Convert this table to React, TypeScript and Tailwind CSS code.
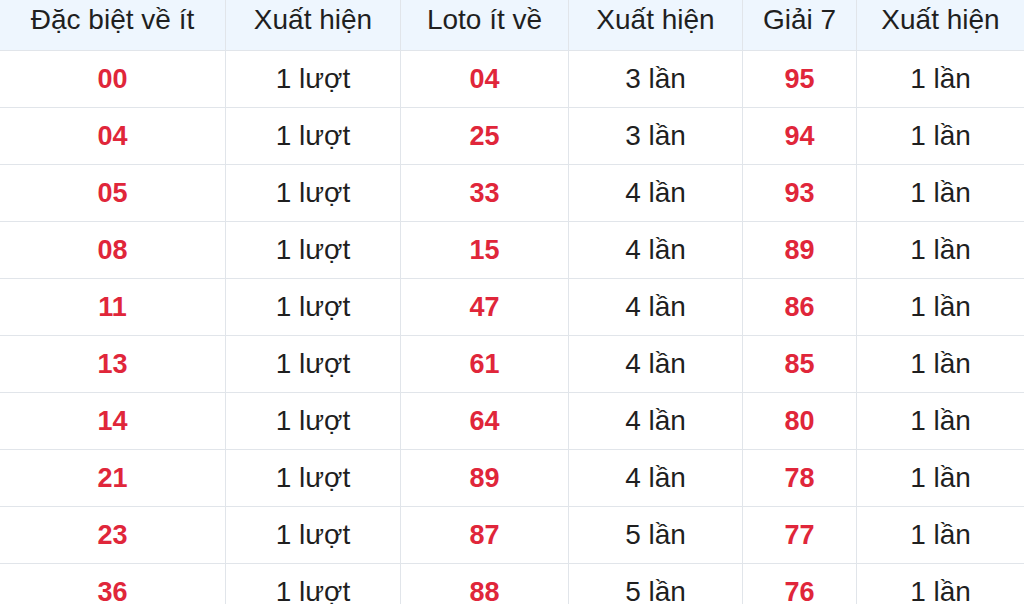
const rows: [string, string, string, string, string, string][] = [
  ["00", "1 lượt", "04", "3 lần", "95", "1 lần"],
  ["04", "1 lượt", "25", "3 lần", "94", "1 lần"],
  ["05", "1 lượt", "33", "4 lần", "93", "1 lần"],
  ["08", "1 lượt", "15", "4 lần", "89", "1 lần"],
  ["11", "1 lượt", "47", "4 lần", "86", "1 lần"],
  ["13", "1 lượt", "61", "4 lần", "85", "1 lần"],
  ["14", "1 lượt", "64", "4 lần", "80", "1 lần"],
  ["21", "1 lượt", "89", "4 lần", "78", "1 lần"],
  ["23", "1 lượt", "87", "5 lần", "77", "1 lần"],
  ["36", "1 lượt", "88", "5 lần", "76", "1 lần"],
];

const headers = ["Đặc biệt về ít", "Xuất hiện", "Loto ít về", "Xuất hiện", "Giải 7", "Xuất hiện"];

const cols = "grid grid-cols-[226px_175px_168px_174px_114px_167px]";

export default function App() {
  return (
    <div className="h-[604px] w-[1024px] overflow-hidden bg-white font-['Liberation_Sans',Arial,sans-serif] text-[28px] leading-none text-[#1f1f1f]">
      <div className={`${cols} h-[51px] border-b border-[#e1e5ea] bg-[#eef6fe]`}>
        {headers.map((h, i) => (
          <div
            key={i}
            className="flex items-center justify-center border-r border-[#e1e5ea] pb-[10px] last:border-r-0"
          >
            {h}
          </div>
        ))}
      </div>
      {rows.map((r, ri) => (
        <div key={ri} className={`${cols} h-[57px] border-b border-[#e1e5ea]`}>
          {r.map((c, ci) => (
            <div
              key={ci}
              className={
                "flex items-center justify-center border-r border-[#e1e5ea] last:border-r-0 " +
                (ci % 2 === 0 ? "text-[27px] font-bold text-[#e0263a]" : "")
              }
            >
              {c}
            </div>
          ))}
        </div>
      ))}
    </div>
  );
}
